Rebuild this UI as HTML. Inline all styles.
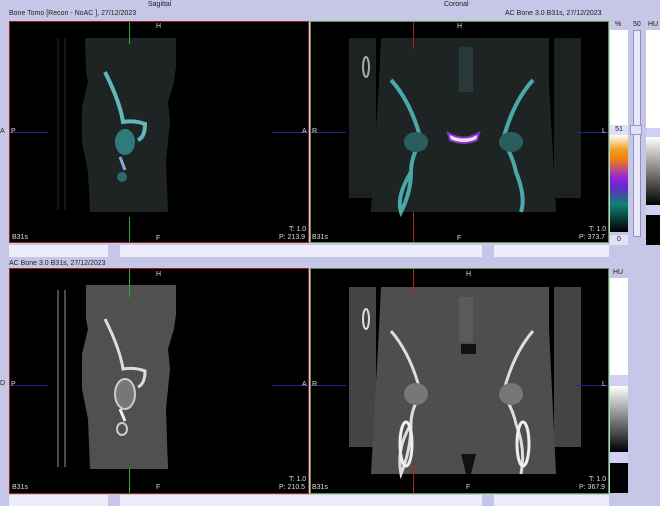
<!DOCTYPE html><html><head><style>
body{margin:0;width:660px;height:506px;background:#c6c6e6;position:relative;overflow:hidden;font-family:"Liberation Sans",sans-serif;font-size:7px;color:#222}
.a{position:absolute}
.p{position:absolute;background:#000;box-sizing:border-box;overflow:hidden}
.p svg{position:absolute;left:0;top:0}
.t{position:absolute;color:#ddd;font-size:7px;white-space:nowrap}
.sb{position:absolute;background:#ececfa}
</style></head><body>
<div class="a" style="left:148px;top:1px">Sagittal</div>
<div class="a" style="left:444px;top:1px">Coronal</div>
<div class="a" style="left:9px;top:10px">Bone Tomo [Recon - NoAC ], 27/12/2023</div>
<div class="a" style="left:505px;top:10px">AC Bone 3.0 B31s, 27/12/2023</div>
<div class="a" style="left:9px;top:260px">AC Bone 3.0 B31s, 27/12/2023</div>

<!-- top left -->
<div class="p" style="left:9px;top:21px;width:300px;height:222px;border:1px solid #a02020">
<svg width="300" height="222">
<path d="M75 16 L166 16 L166 45 L164 60 L158 80 L160 100 L156 140 L158 190 L80 190 L78 150 L72 120 L72 85 L78 60 L76 50 Z" fill="#1e2424"/>
<path d="M95 50 Q110 80 113 100 Q125 98 135 102 Q135 115 128 118" stroke="#5fb8b8" stroke-width="4" fill="none"/>
<ellipse cx="115" cy="120" rx="10" ry="13" fill="#2f7b7b"/>
<path d="M110 135 L115 148" stroke="#8ad" stroke-width="3"/>
<ellipse cx="112" cy="155" rx="5" ry="5" fill="#2a6a6a"/>
<line x1="48" y1="16" x2="48" y2="188" stroke="#2a2a2a"/><line x1="55" y1="16" x2="55" y2="188" stroke="#2a2a2a"/>
<line x1="119.5" y1="0" x2="119.5" y2="22" stroke="#3a3"/><line x1="119.5" y1="195" x2="119.5" y2="222" stroke="#3a3"/>
<line x1="0" y1="110.5" x2="38" y2="110.5" stroke="#1a2a90"/><line x1="262" y1="110.5" x2="300" y2="110.5" stroke="#1a2a90"/>
</svg>
<div class="t" style="left:146px;top:1px">H</div><div class="t" style="left:146px;top:213px">F</div>
<div class="t" style="left:2px;top:212px">B31s</div>
<div class="t" style="left:279px;top:204px">T: 1.0</div><div class="t" style="left:269px;top:212px">P: 213.9</div>
<div class="t" style="left:1px;top:106px">P</div><div class="t" style="left:292px;top:106px">A</div>
</div>
<div class="a" style="left:0;top:128px">A</div>

<!-- top right -->
<div class="p" style="left:310px;top:21px;width:299px;height:222px;border:1px solid #5a9a40">
<svg width="299" height="222">
<rect x="38" y="16" width="27" height="160" fill="#1c2222"/>
<rect x="243" y="16" width="27" height="160" fill="#1c2222"/>
<path d="M70 16 L238 16 L238 60 L245 190 L60 190 L68 60 Z" fill="#1e2424"/>
<path d="M80 58 Q100 80 110 118 Q100 135 100 150 Q85 175 90 190 Q100 170 100 150" stroke="#4aa8a8" stroke-width="4" fill="none"/>
<path d="M222 58 Q202 80 192 118 Q202 135 205 150 Q215 175 210 190" stroke="#4aa8a8" stroke-width="4" fill="none"/>
<ellipse cx="105" cy="120" rx="12" ry="10" fill="#2a5e5e"/>
<ellipse cx="200" cy="120" rx="12" ry="10" fill="#2a5e5e"/>
<path d="M137 111 Q153 120 168 111 L166 118 Q153 124 139 118 Z" fill="#f0e0e0" stroke="#8a30d0" stroke-width="2"/>
<ellipse cx="55" cy="45" rx="3" ry="10" fill="none" stroke="#aaa" stroke-width="2"/>
<rect x="148" y="25" width="14" height="45" fill="#2a3838"/>
<line x1="102.5" y1="0" x2="102.5" y2="27" stroke="#b02020"/><line x1="102.5" y1="190" x2="102.5" y2="222" stroke="#b02020"/>
<line x1="0" y1="110.5" x2="35" y2="110.5" stroke="#1a2a90"/><line x1="265" y1="110.5" x2="299" y2="110.5" stroke="#1a2a90"/>
</svg>
<div class="t" style="left:146px;top:1px">H</div><div class="t" style="left:146px;top:213px">F</div>
<div class="t" style="left:1px;top:212px">B31s</div>
<div class="t" style="left:278px;top:204px">T: 1.0</div><div class="t" style="left:268px;top:212px">P: 373.7</div>
<div class="t" style="left:1px;top:106px">R</div><div class="t" style="left:291px;top:106px">L</div>
</div>

<div class="sb" style="left:9px;top:245px;width:600px;height:12px"></div>
<div class="a" style="left:108px;top:245px;width:12px;height:12px;background:#c6c6ea"></div>
<div class="a" style="left:482px;top:245px;width:12px;height:12px;background:#c6c6ea"></div>

<!-- bottom left -->
<div class="p" style="left:9px;top:268px;width:300px;height:226px;border:1px solid #a02020">
<svg width="300" height="226">
<path d="M76 16 L166 16 L166 45 L164 60 L158 80 L160 100 L156 140 L158 200 L80 200 L78 150 L72 120 L72 85 L78 60 L76 50 Z" fill="#505050"/>
<path d="M95 50 Q110 80 113 100 Q125 98 135 102 Q135 115 128 118" stroke="#ddd" stroke-width="3" fill="none"/>
<ellipse cx="115" cy="125" rx="10" ry="15" fill="#777" stroke="#ccc" stroke-width="2"/>
<path d="M110 140 L115 152" stroke="#eee" stroke-width="3"/>
<ellipse cx="112" cy="160" rx="5" ry="6" fill="none" stroke="#ccc" stroke-width="2"/>
<line x1="48" y1="21" x2="48" y2="198" stroke="#999"/><line x1="55" y1="21" x2="55" y2="198" stroke="#999"/>
<line x1="119.5" y1="0" x2="119.5" y2="28" stroke="#3a3"/><line x1="119.5" y1="200" x2="119.5" y2="226" stroke="#3a3"/>
<line x1="0" y1="116.5" x2="38" y2="116.5" stroke="#1a2a90"/><line x1="262" y1="116.5" x2="300" y2="116.5" stroke="#1a2a90"/>
</svg>
<div class="t" style="left:146px;top:2px">H</div><div class="t" style="left:146px;top:215px">F</div>
<div class="t" style="left:2px;top:215px">B31s</div>
<div class="t" style="left:279px;top:207px">T: 1.0</div><div class="t" style="left:269px;top:215px">P: 210.5</div>
<div class="t" style="left:1px;top:112px">P</div><div class="t" style="left:292px;top:112px">A</div>
</div>
<div class="a" style="left:0;top:380px">D</div>

<!-- bottom right -->
<div class="p" style="left:310px;top:268px;width:299px;height:226px;border:1px solid #5a9a40">
<svg width="299" height="226">
<rect x="38" y="18" width="27" height="160" fill="#444"/>
<rect x="243" y="18" width="27" height="160" fill="#444"/>
<path d="M70 18 L238 18 L238 60 L245 205 L60 205 L68 60 Z" fill="#4e4e4e"/>
<path d="M80 62 Q100 85 110 125 Q100 140 100 155 Q85 180 90 205 Q100 180 100 155" stroke="#ddd" stroke-width="3" fill="none"/>
<path d="M222 62 Q202 85 192 125 Q202 140 205 155 Q215 180 210 205" stroke="#ddd" stroke-width="3" fill="none"/>
<ellipse cx="95" cy="175" rx="6" ry="22" fill="none" stroke="#eee" stroke-width="3"/>
<ellipse cx="212" cy="175" rx="6" ry="22" fill="none" stroke="#eee" stroke-width="3"/>
<ellipse cx="105" cy="125" rx="12" ry="11" fill="#777"/>
<ellipse cx="200" cy="125" rx="12" ry="11" fill="#777"/>
<ellipse cx="55" cy="50" rx="3" ry="10" fill="none" stroke="#ddd" stroke-width="2"/>
<rect x="148" y="28" width="14" height="45" fill="#5a5a5a"/>
<rect x="150" y="75" width="15" height="10" fill="#111"/>
<path d="M150 185 L165 185 L160 205 L155 205 Z" fill="#111"/>
<line x1="102.5" y1="0" x2="102.5" y2="28" stroke="#b02020"/><line x1="102.5" y1="195" x2="102.5" y2="226" stroke="#b02020"/>
<line x1="0" y1="116.5" x2="35" y2="116.5" stroke="#1a2a90"/><line x1="265" y1="116.5" x2="299" y2="116.5" stroke="#1a2a90"/>
</svg>
<div class="t" style="left:155px;top:2px">H</div><div class="t" style="left:155px;top:215px">F</div>
<div class="t" style="left:1px;top:215px">B31s</div>
<div class="t" style="left:278px;top:207px">T: 1.0</div><div class="t" style="left:268px;top:215px">P: 367.9</div>
<div class="t" style="left:1px;top:112px">R</div><div class="t" style="left:291px;top:112px">L</div>
</div>
<div class="sb" style="left:9px;top:495px;width:600px;height:11px"></div>
<div class="a" style="left:108px;top:495px;width:12px;height:11px;background:#c6c6ea"></div>
<div class="a" style="left:482px;top:495px;width:12px;height:11px;background:#c6c6ea"></div>

<!-- right column top -->
<div class="a" style="left:615px;top:21px">%</div>
<div class="a" style="left:633px;top:21px">50</div>
<div class="a" style="left:648px;top:21px">HU</div>
<div class="a" style="left:610px;top:30px;width:18px;height:95px;background:#fff"></div>
<div class="a" style="left:610px;top:125px;width:18px;height:10px;background:#e0e0f8;font-size:7px;text-align:center;line-height:10px">51</div>
<div class="a" style="left:610px;top:135px;width:18px;height:97px;background:linear-gradient(#fff,#f0a020 15%,#f08010 25%,#9020e0 45%,#6030c0 55%,#108070 72%,#000 100%)"></div>
<div class="a" style="left:610px;top:235px;width:18px;height:10px;background:#e0e0f8;text-align:center;line-height:10px">0</div>
<div class="a" style="left:633px;top:30px;width:8px;height:207px;background:#e8e8f8;border:1px solid #9090c0;box-sizing:border-box"></div>
<div class="a" style="left:630px;top:125px;width:12px;height:10px;background:#e0e0f8;border:1px solid #9898c8;box-sizing:border-box"></div>
<div class="a" style="left:646px;top:30px;width:14px;height:98px;background:#fff"></div>
<div class="a" style="left:646px;top:128px;width:14px;height:9px;background:#d0d0f4"></div>
<div class="a" style="left:646px;top:137px;width:14px;height:68px;background:linear-gradient(#fff,#000)"></div>
<div class="a" style="left:646px;top:205px;width:14px;height:10px;background:#d0d0f4"></div>
<div class="a" style="left:646px;top:215px;width:14px;height:30px;background:#000"></div>

<!-- right column bottom -->
<div class="a" style="left:613px;top:269px">HU</div>
<div class="a" style="left:610px;top:278px;width:18px;height:97px;background:#fff"></div>
<div class="a" style="left:610px;top:375px;width:18px;height:11px;background:#d0d0f4"></div>
<div class="a" style="left:610px;top:386px;width:18px;height:66px;background:linear-gradient(#fff,#000)"></div>
<div class="a" style="left:610px;top:452px;width:18px;height:11px;background:#d0d0f4"></div>
<div class="a" style="left:610px;top:463px;width:18px;height:30px;background:#000"></div>
</body></html>
